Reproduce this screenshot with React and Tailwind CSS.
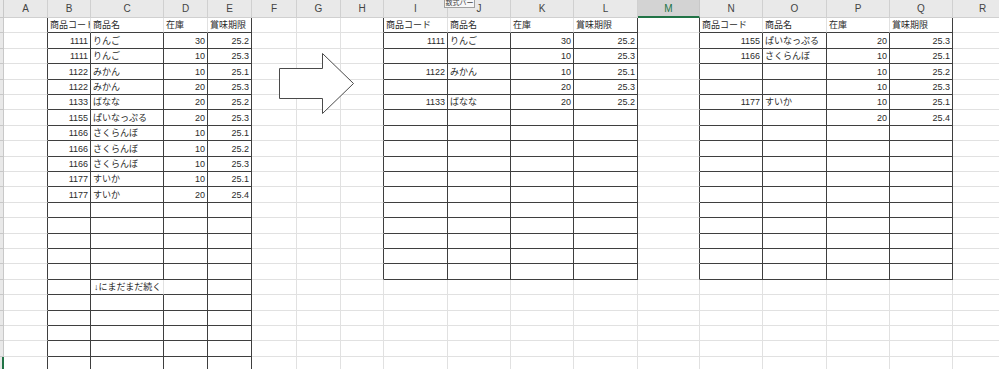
import React from 'react';

const COLS = [
  { k: '', w: 4 }, { k: 'A', w: 44 }, { k: 'B', w: 43 }, { k: 'C', w: 73 }, { k: 'D', w: 44 },
  { k: 'E', w: 44 }, { k: 'F', w: 45 }, { k: 'G', w: 44 }, { k: 'H', w: 43 }, { k: 'I', w: 64 },
  { k: 'J', w: 63 }, { k: 'K', w: 63 }, { k: 'L', w: 64 }, { k: 'M', w: 62 }, { k: 'N', w: 63 },
  { k: 'O', w: 64 }, { k: 'P', w: 63 }, { k: 'Q', w: 63 }, { k: 'R', w: 60 },
];
const ROWS = 23;
const idx = (k) => COLS.findIndex((c) => c.k === k);

// cell contents keyed by row + column letter
const CELLS = {};
const put = (r, c, v, num = false) => { CELLS[`${r}${c}`] = { v, num }; };
const fill = (r, cols, vals) => vals.forEach((v, i) => { if (v !== '') put(r, cols[i], v, i !== 1 && typeof v === 'number'); });

// left table
['商品コード', '商品名', '在庫', '賞味期限'].forEach((v, i) => put(1, 'BCDE'[i], v));
[
  [1111, 'りんご', 30, '25.2'], [1111, 'りんご', 10, '25.3'], [1122, 'みかん', 10, '25.1'],
  [1122, 'みかん', 20, '25.3'], [1133, 'ばなな', 20, '25.2'], [1155, 'ぱいなっぷる', 20, '25.3'],
  [1166, 'さくらんぼ', 10, '25.1'], [1166, 'さくらんぼ', 10, '25.2'], [1166, 'さくらんぼ', 10, '25.3'],
  [1177, 'すいか', 10, '25.1'], [1177, 'すいか', 20, '25.4'],
].forEach((row, i) => {
  fill(i + 2, 'BCDE', row);
  put(i + 2, 'E', row[3], true);
});
put(18, 'C', '↓にまだまだ続く');

// middle table
['商品コード', '商品名', '在庫', '賞味期限'].forEach((v, i) => put(1, 'IJKL'[i], v));
[
  [1111, 'りんご', 30, '25.2'], ['', '', 10, '25.3'], [1122, 'みかん', 10, '25.1'],
  ['', '', 20, '25.3'], [1133, 'ばなな', 20, '25.2'],
].forEach((row, i) => {
  fill(i + 2, 'IJKL', row);
  put(i + 2, 'L', row[3], true);
});

// right table
['商品コード', '商品名', '在庫', '賞味期限'].forEach((v, i) => put(1, 'NOPQ'[i], v));
[
  [1155, 'ぱいなっぷる', 20, '25.3'], [1166, 'さくらんぼ', 10, '25.1'], ['', '', 10, '25.2'],
  ['', '', 10, '25.3'], [1177, 'すいか', 10, '25.1'], ['', '', 20, '25.4'],
].forEach((row, i) => {
  fill(i + 2, 'NOPQ', row);
  put(i + 2, 'Q', row[3], true);
});

const TABLES = [
  { c0: idx('B'), c1: idx('E'), r0: 1, r1: 23 },
  { c0: idx('I'), c1: idx('L'), r0: 1, r1: 17 },
  { c0: idx('N'), c1: idx('Q'), r0: 1, r1: 17 },
];

const rightDark = (r, ci) =>
  TABLES.some((t) => {
    if (r < t.r0 || r > t.r1) return false;
    if (ci === t.c0 - 1 || ci === t.c1) return true;
    if (ci >= t.c0 && ci < t.c1 && r !== t.r0) {
      if (r === 18 && ci === idx('C')) return false; // text runs over into D
      return true;
    }
    return false;
  });
const bottomDark = (r, ci) => TABLES.some((t) => r >= t.r0 && r <= t.r1 && ci >= t.c0 && ci <= t.c1);

const FONT = { fontFamily: '"Liberation Sans", "Noto Sans CJK JP", sans-serif' };

const Arrow = () => (
  <svg className="absolute left-[278px] top-[52px]" width="78" height="63" viewBox="0 0 78 63">
    <path d="M1.5 16.5 H44.5 V1.5 L75.5 31.5 L44.5 61.5 V46.5 H1.5 Z" fill="#fff" stroke="#4a4a4a" strokeWidth="1" />
  </svg>
);

const App = () => {
  const cells = [];
  for (let r = 0; r <= ROWS; r++) {
    COLS.forEach((col, ci) => {
      const key = `${r}-${ci}`;
      if (r === 0) {
        if (ci === 0) {
          cells.push(<div key={key} className="bg-[#e9e9e9] border-r border-b border-[#c8c8c8]" />);
        } else if (col.k === 'M') {
          cells.push(
            <div key={key} className="bg-[#d3d3d3] border-r border-[#c8c8c8] border-b-2 border-b-[#217346] flex items-center justify-center text-[10px] text-[#217346]">
              {col.k}
            </div>
          );
        } else {
          cells.push(
            <div key={key} className="bg-[#e9e9e9] border-r border-b border-[#d0d0d0] flex items-center justify-center text-[10px] text-[#444]">
              {col.k}
            </div>
          );
        }
        return;
      }
      if (ci === 0) {
        cells.push(
          <div key={key} className={`bg-[#e9e9e9] border-b border-[#c8c8c8] ${r === ROWS ? 'border-r-2 border-r-[#217346]' : 'border-r border-r-[#c8c8c8]'}`} />
        );
        return;
      }
      const cell = CELLS[`${r}${col.k}`];
      const rd = rightDark(r, ci);
      const bd = bottomDark(r, ci);
      const overflow = r === 18 && col.k === 'C';
      cells.push(
        <div
          key={key}
          className={`relative flex items-end px-[2px] pb-[1px] whitespace-nowrap text-[9px] leading-[12px] text-[#2b2b2b] border-r border-b ${
            rd ? 'border-r-[#3f3f3f]' : 'border-r-[#e1e1e1]'
          } ${bd ? 'border-b-[#3f3f3f]' : 'border-b-[#e1e1e1]'} ${cell && cell.num ? 'justify-end' : 'justify-start'} ${
            overflow ? 'overflow-visible z-10 pl-[3px]' : 'overflow-hidden'
          }`}
        >
          {cell ? cell.v : null}
          {r === ROWS && col.k === 'M' && (
            <div className="absolute -left-[2px] -top-[2px] w-[65px] h-[20px] border-2 border-[#217346]" />
          )}
        </div>
      );
    });
  }

  return (
    <div className="relative w-[999px] h-[369px] overflow-hidden bg-white" style={FONT}>
      <div className="grid grid-cols-[4px_44px_43px_73px_44px_44px_45px_44px_43px_64px_63px_63px_64px_62px_63px_64px_63px_63px_60px] grid-rows-[18px_15px_16px_15px_16px_15px_15px_16px_15px_16px_15px_15px_16px_15px_16px_15px_15px_16px_15px_16px_15px_15px_16px_15px]">
        {cells}
      </div>
      <Arrow />
      {/* formula-bar tooltip peeking in at the top */}
      <div className="absolute left-[444px] -top-[4px] w-[31px] h-[12px] border border-[#a0a0a0] bg-[#f7f7f7] flex items-end justify-center overflow-hidden whitespace-nowrap text-[7px] leading-[9px] text-[#444]">
        数式バー
      </div>
    </div>
  );
};

export default App;
